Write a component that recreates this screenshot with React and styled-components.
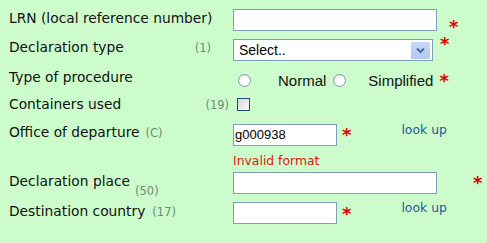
import React from "react";
import styled, { createGlobalStyle } from "styled-components";

const Global = createGlobalStyle`
  html, body { margin: 0; padding: 0; background: #ccfccc; }
  body { font-family: "DejaVu Sans", Verdana, sans-serif; }
`;

const Form = styled.div`
  width: 487px;
  height: 243px;
  box-sizing: border-box;
  padding-top: 5px;
  background: #ccfccc;
  display: flex;
  flex-direction: column;
`;

const Row = styled.div`
  display: flex;
  align-items: center;
  height: ${(p) => p.h}px;
`;

const LabelCell = styled.div`
  width: 233px;
  box-sizing: border-box;
  padding-left: 9px;
  align-self: flex-start;
  margin-top: ${(p) => p.mt || 0}px;
  display: flex;
  align-items: baseline;
`;

const Label = styled.span`
  font-size: 13.8px;
  line-height: 16px;
  color: #111;
  white-space: nowrap;
`;

const Hint = styled.span`
  font-size: 11.5px;
  line-height: 13px;
  color: #6f8c75;
  white-space: nowrap;
  margin-left: ${(p) => (p.right != null ? "auto" : `${p.ml || 6}px`)};
  margin-right: ${(p) => p.right || 0}px;
  ${(p) => (p.low != null ? `align-self: flex-start; margin-top: ${p.low}px;` : "")}
`;

const Field = styled.div`
  flex: 1;
  display: flex;
  align-items: center;
  height: 100%;
`;

const TextInput = styled.input`
  box-sizing: border-box;
  width: ${(p) => p.w}px;
  height: 22px;
  margin: 0;
  padding: 0 2px 0 1px;
  border: 1px solid #7f9db9;
  background: #fff;
  font-family: "Liberation Sans", Arial, sans-serif;
  font-size: 13px;
  color: #000;
  outline: none;
`;

const SelectBox = styled.div`
  box-sizing: border-box;
  width: 200px;
  height: 22px;
  border: 1px solid #7f9db9;
  background: #fff;
  display: flex;
  align-items: center;
  padding: 0 2px 0 5px;
  font-family: "Liberation Sans", Arial, sans-serif;
  font-size: 14px;
  color: #000;
`;

const SelectText = styled.span`
  flex: 1;
`;

const ArrowButton = styled.span`
  width: 19px;
  height: 17px;
  border-radius: 1px;
  background: linear-gradient(180deg, #c6d8fb 0%, #b2c9f4 100%);
  display: flex;
  align-items: center;
  justify-content: center;
`;

const Req = styled.span`
  align-self: flex-start;
  margin-top: ${(p) => p.mt}px;
  margin-left: ${(p) => p.ml}px;
  font-family: "DejaVu Sans", sans-serif;
  font-weight: bold;
  font-size: 18px;
  line-height: 18px;
  color: #e00000;
`;

const LookUp = styled.a`
  align-self: flex-start;
  margin-top: ${(p) => p.mt}px;
  margin-left: ${(p) => p.ml}px;
  font-size: 12.4px;
  line-height: 15px;
  color: #1d5a98;
  text-decoration: none;
  cursor: pointer;
`;

const Radio = styled.span`
  box-sizing: border-box;
  width: 13px;
  height: 13px;
  border-radius: 50%;
  border: 1px solid #8196b2;
  background: radial-gradient(circle at 60% 60%, #ffffff 30%, #e4e4e0 100%);
  margin-left: ${(p) => p.ml || 0}px;
  flex: none;
`;

const Option = styled.span`
  font-family: "Liberation Sans", Arial, sans-serif;
  font-size: 15px;
  color: #111;
  margin-left: ${(p) => p.ml}px;
`;

const Checkbox = styled.span`
  box-sizing: border-box;
  width: 13px;
  height: 13px;
  border: 1px solid #1c5180;
  background: linear-gradient(135deg, #d8d8d2 0%, #f4f4f2 80%, #ffffff 100%);
  margin-left: ${(p) => p.ml}px;
`;

const ErrorText = styled.span`
  margin-left: 233px;
  font-size: 12.4px;
  line-height: 12px;
  color: #dd1515;
`;

const Chevron = () => (
  <svg width="9" height="7" viewBox="0 0 9 7">
    <path d="M1 1.5 L4.5 5 L8 1.5" fill="none" stroke="#4d6a99" strokeWidth="2" />
  </svg>
);

export default function App() {
  return (
    <>
      <Global />
      <Form>
        <Row h={30}>
          <LabelCell mt={5}>
            <Label>LRN (local reference number)</Label>
          </LabelCell>
          <Field>
            <TextInput w={204} readOnly defaultValue="" />
            <Req ml={12} mt={13}>*</Req>
          </Field>
        </Row>
        <Row h={30}>
          <LabelCell mt={4}>
            <Label>Declaration type</Label>
            <Hint right={22}>(1)</Hint>
          </LabelCell>
          <Field>
            <SelectBox>
              <SelectText>Select..</SelectText>
              <ArrowButton>
                <Chevron />
              </ArrowButton>
            </SelectBox>
            <Req ml={7} mt={0}>*</Req>
          </Field>
        </Row>
        <Row h={30}>
          <LabelCell mt={4}>
            <Label>Type of procedure</Label>
          </LabelCell>
          <Field>
            <Radio ml={5} />
            <Option ml={27}>Normal</Option>
            <Radio ml={7} />
            <Option ml={22}>Simplified</Option>
            <Req ml={6} mt={7}>*</Req>
          </Field>
        </Row>
        <Row h={19}>
          <LabelCell mt={1}>
            <Label>Containers used</Label>
            <Hint right={4}>(19)</Hint>
          </LabelCell>
          <Field>
            <Checkbox ml={4} />
          </Field>
        </Row>
        <Row h={41}>
          <LabelCell mt={10}>
            <Label>Office of departure</Label>
            <Hint ml={6}>(C)</Hint>
          </LabelCell>
          <Field>
            <TextInput w={104} readOnly defaultValue="g000938" />
            <Req ml={5} mt={12}>*</Req>
            <LookUp ml={50} mt={8}>look up</LookUp>
          </Field>
        </Row>
        <Row h={12}>
          <ErrorText>Invalid format</ErrorText>
        </Row>
        <Row h={32}>
          <LabelCell mt={6}>
            <Label>Declaration place</Label>
            <Hint ml={5} low={12}>(50)</Hint>
          </LabelCell>
          <Field>
            <TextInput w={204} readOnly defaultValue="" />
            <Req ml={36} mt={7}>*</Req>
          </Field>
        </Row>
        <Row h={28}>
          <LabelCell mt={4}>
            <Label>Destination country</Label>
            <Hint ml={7}>(17)</Hint>
          </LabelCell>
          <Field>
            <TextInput w={104} readOnly defaultValue="" />
            <Req ml={5} mt={6}>*</Req>
            <LookUp ml={50} mt={1}>look up</LookUp>
          </Field>
        </Row>
      </Form>
    </>
  );
}
